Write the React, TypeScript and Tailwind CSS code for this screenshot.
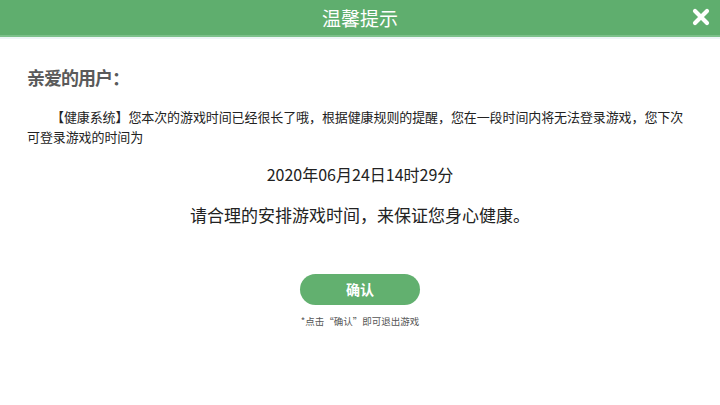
export default function App() {
  return (
    <div
      className="w-[720px] h-[405px] bg-white overflow-hidden"
      style={{ fontFamily: '"Noto Sans CJK SC", "Noto Sans", sans-serif' }}
    >
      <div className="relative h-[37px] bg-[#5fae6e] flex items-center justify-center border-b-2 border-[#7cc08a]">
        <span className="text-white text-[19px] leading-none">温馨提示</span>
        <button className="absolute right-[10px] top-[8px] w-[18px] h-[18px]" aria-label="关闭">
          <svg viewBox="0 0 18 18" className="w-full h-full">
            <path d="M3 3 L15 15 M15 3 L3 15" stroke="white" strokeWidth="4.2" strokeLinecap="round" />
          </svg>
        </button>
      </div>
      <div className="h-[2px] bg-[#eef5f7]" />

      <div className="px-[27px]">
        <h2 className="mt-[26px] text-[18px] leading-[24px] font-bold text-[#5a5a5a] tracking-[-1px]">亲爱的用户：</h2>
        <p className="mt-[18px] text-[13px] leading-[20px] text-[#222] indent-[24px] tracking-[-0.1px]">
          【健康系统】您本次的游戏时间已经很长了哦，根据健康规则的提醒，您在一段时间内将无法登录游戏，您下次可登录游戏的时间为
        </p>
        <p className="mt-[16px] text-center text-[16px] leading-[22px] text-[#222]">2020年06月24日14时29分</p>
        <p className="mt-[18px] text-center text-[17px] leading-[24px] text-[#222]">请合理的安排游戏时间，来保证您身心健康。</p>
      </div>

      <div className="flex flex-col items-center mt-[47px]">
        <button className="w-[120px] h-[31px] rounded-full bg-[#62b06f] text-white text-[14px] font-bold">确认</button>
        <p className="mt-[10px] text-[9.5px] leading-[12px] text-[#555]">*点击“确认”即可退出游戏</p>
      </div>
    </div>
  )
}
